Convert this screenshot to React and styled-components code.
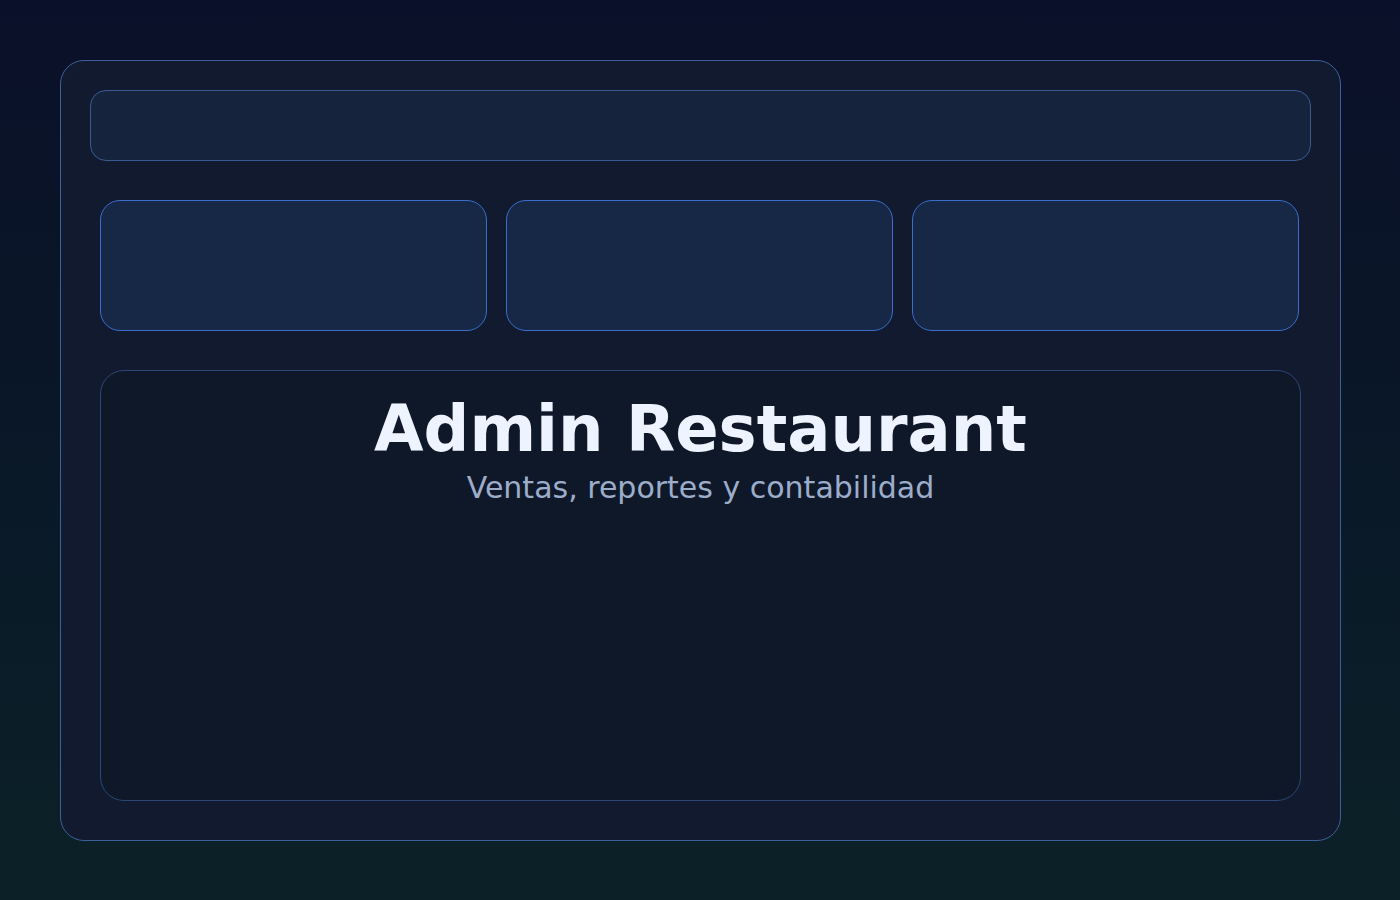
import React from 'react';
import styled, { createGlobalStyle } from 'styled-components';

const GlobalStyle = createGlobalStyle`
  html, body {
    margin: 0;
    padding: 0;
  }
  body {
    width: 1400px;
    height: 900px;
    background: linear-gradient(180deg, #0a1029 0%, #0a1828 50%, #0b2127 100%);
    font-family: "DejaVu Sans", "Liberation Sans", sans-serif;
    overflow: hidden;
  }
`

const Page = styled.div`
  box-sizing: border-box;
  width: 1400px;
  height: 900px;
  padding: 60px 59px 59px 60px;
`

const Frame = styled.div`
  box-sizing: border-box;
  height: 781px;
  border: 1px solid #3f5f9a;
  border-radius: 24px;
  background: #111a2e;
  padding: 29px 29px 39px;
  display: flex;
  flex-direction: column;
`

const TopBar = styled.div`
  box-sizing: border-box;
  height: 71px;
  border: 1px solid #3a5a94;
  border-radius: 16px;
  background: #15233d;
`

const CardRow = styled.div`
  display: grid;
  grid-template-columns: repeat(3, 387px);
  gap: 19px;
  margin: 39px 10px 0;
`

const Card = styled.div`
  box-sizing: border-box;
  height: 131px;
  border: 1px solid #3b6dcc;
  border-radius: 20px;
  background: #172847;
`

const Panel = styled.div`
  box-sizing: border-box;
  flex: 1;
  margin: 39px 10px 0;
  border: 1px solid #2c4676;
  border-radius: 24px;
  background: #0f1829;
  padding-top: 26px;
  display: flex;
  flex-direction: column;
  align-items: center;
`

const Title = styled.h1`
  margin: 0;
  font-size: 64px;
  line-height: 64px;
  font-weight: 700;
  color: #eef4ff;
`

const Subtitle = styled.p`
  margin: 12px 0 0;
  font-size: 30px;
  line-height: 30px;
  color: #9cadca;
`

export default function App() {
  return (
    <>
      <GlobalStyle />
      <Page>
        <Frame>
          <TopBar />
          <CardRow>
            <Card />
            <Card />
            <Card />
          </CardRow>
          <Panel>
            <Title>Admin Restaurant</Title>
            <Subtitle>Ventas, reportes y contabilidad</Subtitle>
          </Panel>
        </Frame>
      </Page>
    </>
  )
}
